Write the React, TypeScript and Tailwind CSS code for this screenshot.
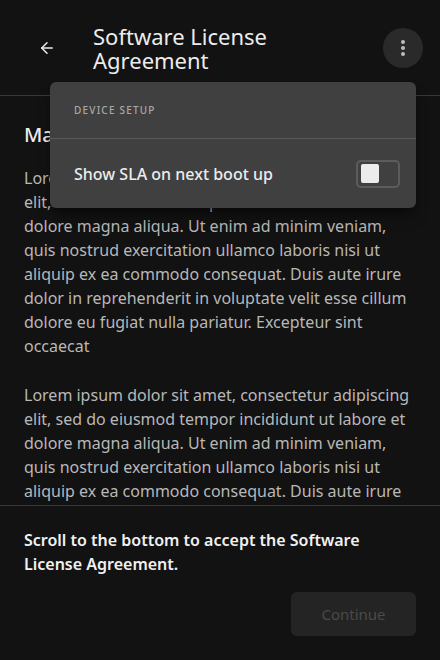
import { ArrowLeft } from "lucide-react";

const lorem =
  "Lorem ipsum dolor sit amet, consectetur adipiscing elit, sed do eiusmod tempor incididunt ut labore et dolore magna aliqua. Ut enim ad minim veniam, quis nostrud exercitation ullamco laboris nisi ut aliquip ex ea commodo consequat. Duis aute irure dolor in reprehenderit in voluptate velit esse cillum dolore eu fugiat nulla pariatur. Excepteur sint occaecat";

function SettingsMenu() {
  return (
    <div className="absolute left-[50px] top-[82px] w-[366px] rounded-md bg-[#404040] shadow-lg shadow-black/40">
      <div className="flex h-[56px] items-center px-6">
        <span className="text-[10px] font-medium uppercase tracking-[0.12em] text-[#a8a8a8]">Device setup</span>
      </div>
      <div className="h-px bg-[#5a5a5a]" />
      <div className="flex h-[69px] items-center justify-between pl-6 pr-4">
        <span className="text-base font-medium text-[#ececec]">Show SLA on next boot up</span>
        <button className="flex h-[28px] w-[44px] items-center rounded-[5px] border-2 border-[#5c5c5c] px-[3px]" aria-label="Show SLA on next boot up">
          <span className="h-[19px] w-[18px] rounded-[2px] bg-[#ececec]" />
        </button>
      </div>
    </div>
  );
}

export default function App() {
  return (
    <div className="relative flex h-[660px] w-[440px] flex-col overflow-hidden bg-[#121212] font-['Noto_Sans',sans-serif]">
      <header className="flex h-[96px] shrink-0 items-center border-b border-[#383838] pl-[37px] pr-[17px]">
        <button className="flex h-[20px] w-[20px] items-center justify-center text-[#ececec]" aria-label="Back">
          <ArrowLeft className="h-[18px] w-[18px]" strokeWidth={2} />
        </button>
        <h1 className="ml-[36px] flex-1 text-[22px] leading-[24px] text-[#ececec]">
          Software License
          <br />
          Agreement
        </h1>
        <button className="flex h-[40px] w-[40px] items-center justify-center rounded-full bg-[#2a2a2a]" aria-label="More">
          <span className="flex flex-col gap-[2px]">
            <span className="h-[4px] w-[4px] rounded-full bg-[#bdbdbd]" />
            <span className="h-[4px] w-[4px] rounded-full bg-[#bdbdbd]" />
            <span className="h-[4px] w-[4px] rounded-full bg-[#bdbdbd]" />
          </span>
        </button>
      </header>

      <main className="flex-1 overflow-hidden px-6 pt-[27px]">
        <h2 className="text-[20px] font-medium leading-[24px] text-[#ececec]">Main Terms</h2>
        <p className="mt-[19px] text-base leading-[24px] text-[#b8b8b8]">{lorem}</p>
        <p className="mt-[25px] text-base leading-[24px] text-[#b8b8b8]">{lorem}</p>
      </main>

      <footer className="shrink-0 border-t border-[#383838] px-6 pb-[24px] pt-[22px]">
        <p className="text-base font-semibold leading-[24px] text-[#f0f0f0]">
          Scroll to the bottom to accept the Software License Agreement.
        </p>
        <div className="mt-[16px] flex justify-end">
          <button disabled className="h-[44px] w-[125px] rounded-md bg-[#242424] text-[15px] text-[#4a4a4a]">
            Continue
          </button>
        </div>
      </footer>

      <SettingsMenu />
    </div>
  );
}
